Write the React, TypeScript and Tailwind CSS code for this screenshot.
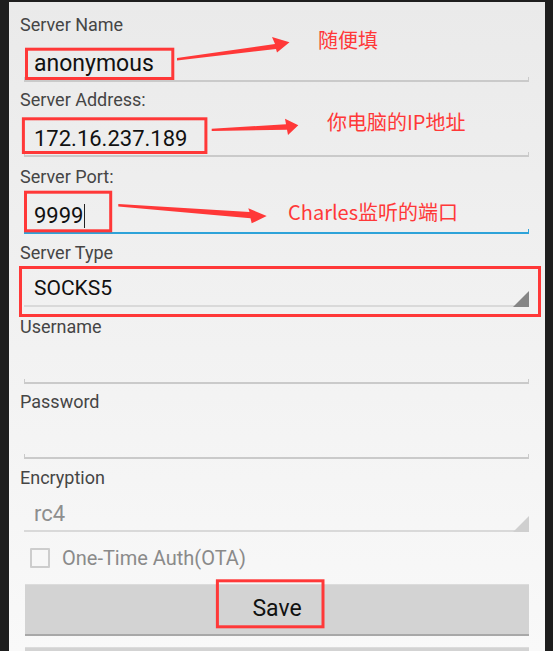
import clsx from 'clsx';
import type { ReactNode } from 'react';

function FieldLabel({ children, className }: { children: ReactNode; className?: string }) {
  return (
    <div className={clsx('h-[21px] pl-[11px] text-[18px] leading-[21px] text-[#454545]', className)}>
      {children}
    </div>
  );
}

function EditText({
  value,
  focused,
  big,
  className,
}: {
  value?: string;
  focused?: boolean;
  big?: boolean;
  className?: string;
}) {
  return (
    <div className={clsx('ml-[15px] mr-[16px] flex h-[47px] flex-col justify-between', className)}>
      <div
        className={clsx(
          'flex h-[42px] items-start pl-[10px] leading-[26px] text-[#111]',
          big ? 'pt-[16px] text-[23px]' : 'pt-[16px] text-[22px]'
        )}
      >
        {value}
        {focused && <span className="ml-[1px] mt-[1px] h-[24px] w-px bg-[#222]" />}
      </div>
      <div
        className={clsx(
          'h-[5px] border-x border-b-2',
          focused ? 'border-[#2ea3d9]' : 'border-[#cacaca]'
        )}
      />
    </div>
  );
}

function Spinner({ value, disabled }: { value: string; disabled?: boolean }) {
  return (
    <div className="relative ml-[15px] mr-[16px] flex h-[44px] flex-col justify-between">
      <div
        className={clsx(
          'pl-[10px] leading-[26px]',
          disabled ? 'pt-[13px] text-[22px] text-[#8e8e8e]' : 'pt-[12px] text-[21px] text-[#111]'
        )}
      >
        {value}
      </div>
      <div className="h-[2px] bg-[#d9d9d9]" />
      <svg className="absolute bottom-0 right-0" width="16" height="16" viewBox="0 0 16 16">
        <polygon points="16,0 16,16 0,16" fill={disabled ? '#cfcfcf' : '#858585'} />
      </svg>
    </div>
  );
}

function Annotations() {
  const red = '#ff3838';
  return (
    <div className="pointer-events-none absolute inset-0 font-['Noto_Sans_CJK_SC',sans-serif] text-[20px] leading-[20px] text-[#ff3838]">
      <svg className="absolute inset-0" width="553" height="651" viewBox="0 0 553 651">
        <g fill="none" stroke={red} strokeWidth="3">
          <rect x="26.5" y="49.2" width="146.3" height="29.3" />
          <rect x="23.4" y="118.8" width="182.5" height="33.7" />
          <rect x="25.5" y="192.2" width="85.2" height="38.6" />
          <rect x="20.5" y="267.5" width="519" height="48" />
          <rect x="217.4" y="580.8" width="105.6" height="46" />
        </g>
        <g fill={red}>
          <polygon points="177,58 275,44 272,37 289.5,42.3 277,52.5 276,49 177,60.5" />
          <polygon points="211.7,128.7 286,124.3 285,118.7 298.3,125.3 288,135 287,129.7 211.7,131" />
          <polygon points="118.3,204 249.5,212 248.3,208.3 266.7,216 251.7,223.3 250.5,218.3 118.3,206.5" />
        </g>
      </svg>
      <div className="absolute left-[318px] top-[30px]">随便填</div>
      <div className="absolute left-[327px] top-[112px]">你电脑的IP地址</div>
      <div className="absolute left-[288px] top-[202px]">Charles监听的端口</div>
    </div>
  );
}

export default function App() {
  return (
    <div className="relative h-[651px] w-[553px] overflow-hidden bg-[#1e1e1e] pl-[9px] pr-[8px] pt-[2px] font-['Roboto',sans-serif]">
      <div className="h-full bg-gradient-to-b from-[#eaeaea] to-[#f9f9f9] pt-[12px]">
        <FieldLabel>Server Name</FieldLabel>
        <EditText value="anonymous" big />

        <FieldLabel className="mt-[7px]">Server Address:</FieldLabel>
        <EditText value="172.16.237.189" />

        <FieldLabel className="mt-[9px]">Server Port:</FieldLabel>
        <EditText value="9999" focused />

        <FieldLabel className="mt-[8px]">Server Type</FieldLabel>
        <Spinner value="SOCKS5" />

        <FieldLabel className="mt-[9px]">Username</FieldLabel>
        <EditText className="h-[46px]" />

        <FieldLabel className="mt-[7px]">Password</FieldLabel>
        <EditText />

        <FieldLabel className="mt-[8px]">Encryption</FieldLabel>
        <Spinner value="rc4" disabled />

        {/* OTA checkbox */}
        <div className="ml-[21px] mt-[16px] flex h-[20px] items-center gap-[12px]">
          <div className="h-[20px] w-[20px] rounded-[1px] border-2 border-[#cdcdcd] bg-[#f7f7f7]" />
          <span className="text-[20px] leading-[24px] text-[#8a8a8a]">One-Time Auth(OTA)</span>
        </div>

        {/* Buttons */}
        <button
          type="button"
          className="ml-[16px] mt-[16px] flex h-[52px] w-[504px] items-center justify-center border-b-2 border-t border-b-[#a8a8a8] border-t-[#dcdcdc] bg-[#d3d3d3] text-[23px] text-[#111]"
        >
          Save
        </button>
        <div className="ml-[16px] mt-[11px] h-[52px] w-[504px] border-t border-[#dcdcdc] bg-[#d3d3d3]" />
      </div>
      <Annotations />
    </div>
  );
}
